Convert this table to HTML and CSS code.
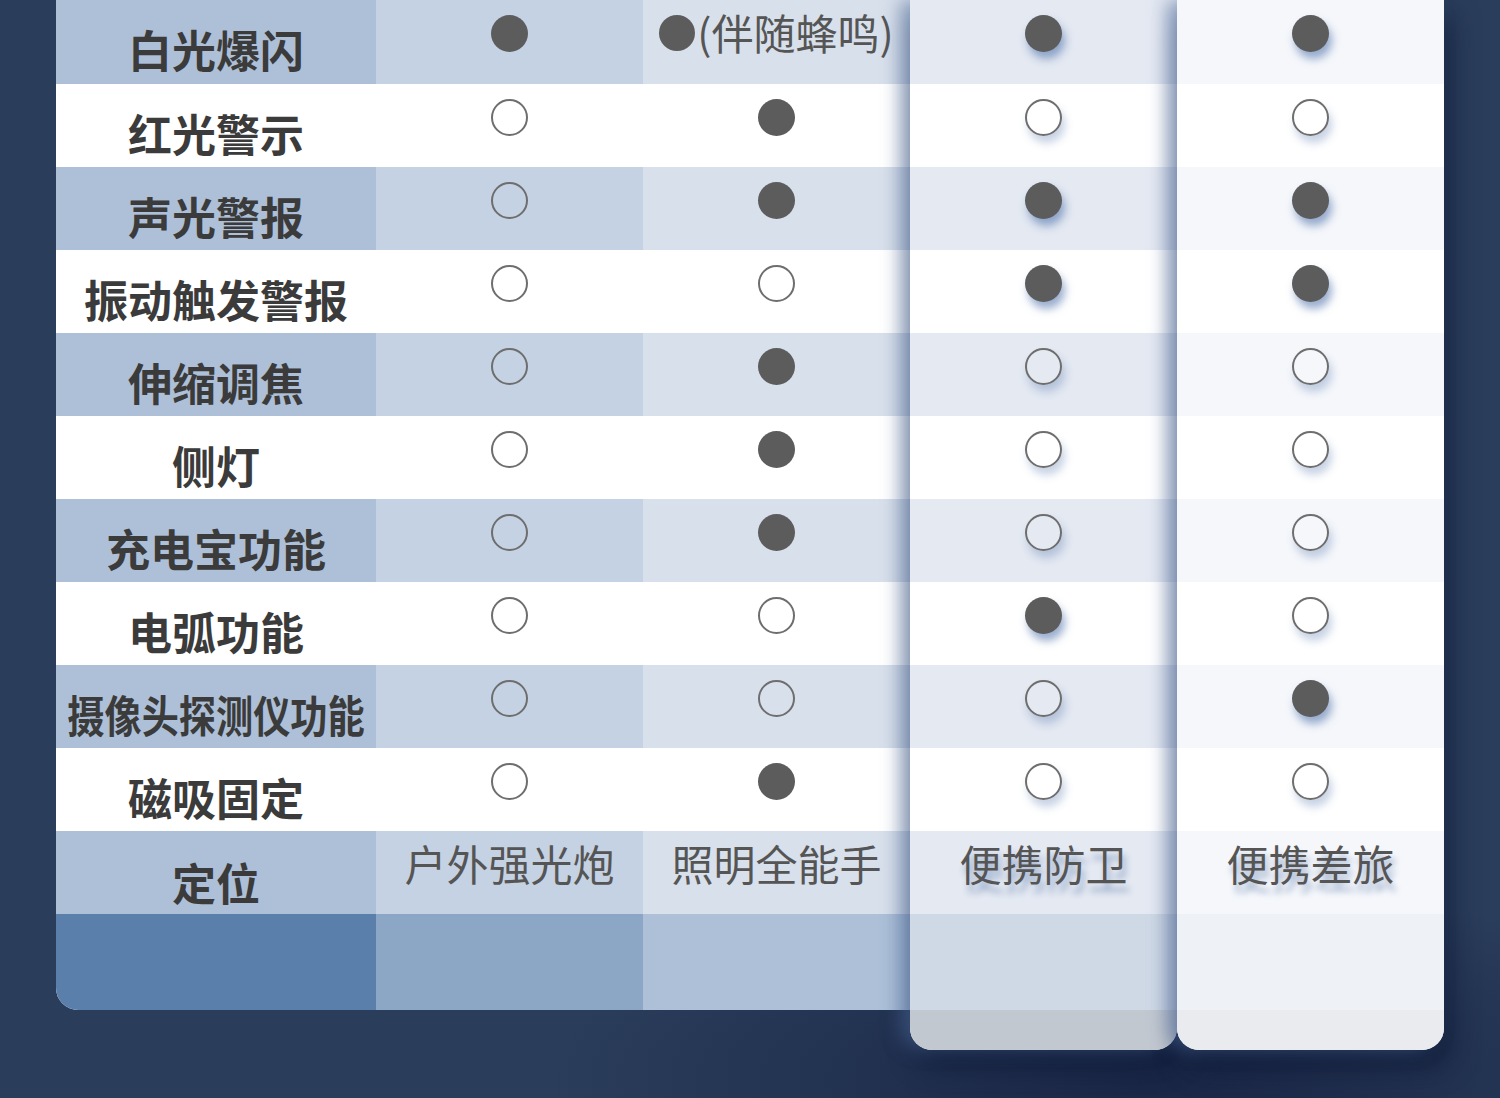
FILE: index.html
```html
<!DOCTYPE html>
<html lang="zh-CN">
<head>
<meta charset="utf-8">
<title>对比表</title>
<link rel="stylesheet" href="styles.css">
</head>
<body>
<div class="table">
  <div class="base">
    <div class="col label">
      <div class="cell s"><span class="lt">白光爆闪</span></div>
      <div class="cell"><span class="lt">红光警示</span></div>
      <div class="cell s"><span class="lt">声光警报</span></div>
      <div class="cell"><span class="lt">振动触发警报</span></div>
      <div class="cell s"><span class="lt">伸缩调焦</span></div>
      <div class="cell"><span class="lt">侧灯</span></div>
      <div class="cell s"><span class="lt">充电宝功能</span></div>
      <div class="cell"><span class="lt">电弧功能</span></div>
      <div class="cell s"><span class="lt tight">摄像头探测仪功能</span></div>
      <div class="cell"><span class="lt">磁吸固定</span></div>
      <div class="cell s"><span class="lt">定位</span></div>
      <div class="cell f"></div>
    </div>
    <div class="col c1">
      <div class="cell s"><span class="dot"></span></div>
      <div class="cell"><span class="ring"></span></div>
      <div class="cell s"><span class="ring"></span></div>
      <div class="cell"><span class="ring"></span></div>
      <div class="cell s"><span class="ring"></span></div>
      <div class="cell"><span class="ring"></span></div>
      <div class="cell s"><span class="ring"></span></div>
      <div class="cell"><span class="ring"></span></div>
      <div class="cell s"><span class="ring"></span></div>
      <div class="cell"><span class="ring"></span></div>
      <div class="cell s"><span class="name">户外强光炮</span></div>
      <div class="cell f"></div>
    </div>
    <div class="col c2">
      <div class="cell s note-cell"><span class="note"><span class="dot small"></span>(伴随蜂鸣)</span></div>
      <div class="cell"><span class="dot"></span></div>
      <div class="cell s"><span class="dot"></span></div>
      <div class="cell"><span class="ring"></span></div>
      <div class="cell s"><span class="dot"></span></div>
      <div class="cell"><span class="dot"></span></div>
      <div class="cell s"><span class="dot"></span></div>
      <div class="cell"><span class="ring"></span></div>
      <div class="cell s"><span class="ring"></span></div>
      <div class="cell"><span class="dot"></span></div>
      <div class="cell s"><span class="name">照明全能手</span></div>
      <div class="cell f"></div>
    </div>
  </div>
  <div class="col card c3">
    <div class="cell s"><span class="dot"></span></div>
    <div class="cell"><span class="ring"></span></div>
    <div class="cell s"><span class="dot"></span></div>
    <div class="cell"><span class="dot"></span></div>
    <div class="cell s"><span class="ring"></span></div>
    <div class="cell"><span class="ring"></span></div>
    <div class="cell s"><span class="ring"></span></div>
    <div class="cell"><span class="dot"></span></div>
    <div class="cell s"><span class="ring"></span></div>
    <div class="cell"><span class="ring"></span></div>
    <div class="cell s"><span class="name">便携防卫</span></div>
    <div class="cell f"></div>
    <div class="foot"></div>
  </div>
  <div class="col card c4">
    <div class="cell s"><span class="dot"></span></div>
    <div class="cell"><span class="ring"></span></div>
    <div class="cell s"><span class="dot"></span></div>
    <div class="cell"><span class="dot"></span></div>
    <div class="cell s"><span class="ring"></span></div>
    <div class="cell"><span class="ring"></span></div>
    <div class="cell s"><span class="ring"></span></div>
    <div class="cell"><span class="ring"></span></div>
    <div class="cell s"><span class="dot"></span></div>
    <div class="cell"><span class="ring"></span></div>
    <div class="cell s"><span class="name">便携差旅</span></div>
    <div class="cell f"></div>
    <div class="foot"></div>
  </div>
</div>
</body>
</html>
```

FILE: styles.css
```css
html, body {
  margin: 0;
  padding: 0;
}
body {
  width: 1500px;
  height: 1098px;
  overflow: hidden;
  background: radial-gradient(ellipse 600px 200px at 1150px 1080px, #1a2646 0%, rgba(26,38,70,0) 100%), #2a3d5b;
  font-family: "Noto Sans CJK SC", "Noto Sans", sans-serif;
  color: #555;
}
.table {
  display: flex;
  align-items: flex-start;
  margin-left: 56px;
}
.base {
  display: flex;
  border-bottom-left-radius: 22px;
  overflow: hidden;
}
.col {
  display: flex;
  flex-direction: column;
  background: #fff;
}
.label { width: 320px; }
.c1 { width: 267px; }
.c2 { width: 267px; }
.card {
  width: 267px;
  position: relative;
  border-radius: 0 0 22px 22px;
  overflow: hidden;
}
.c3 {
  z-index: 1;
  box-shadow: -10px 0 18px rgba(80, 110, 160, 0.5), 4px 14px 26px rgba(8, 18, 45, 0.55);
}
.c4 {
  z-index: 2;
  box-shadow: -10px 0 18px rgba(80, 110, 160, 0.55), 6px 16px 28px rgba(8, 18, 45, 0.6);
}
.cell {
  height: 83px;
  display: flex;
  justify-content: center;
  align-items: flex-start;
  padding-top: 15px;
  box-sizing: border-box;
  background: #fff;
}
.cell:first-child { height: 84px; }
.cell.f { height: 96px; padding: 0; }
.cell.note-cell { padding-top: 10px; }
.foot { height: 40px; }

.label .s { background: #adc0d8; }
.label .f { background: #5b7fab; }
.c1 .s { background: #c5d2e3; }
.c1 .f { background: #8ca6c6; }
.c2 .s { background: #d8e0eb; }
.c2 .f { background: #adc0d8; }
.c3 .s { background: #e4e9f2; }
.c3 .f { background: #cfd9e6; }
.c3 .foot { background: #c2c8d0; }
.c4 .s { background: #f5f7fb; }
.c4 .f { background: #eef2f6; }
.c4 .foot { background: #e9ebee; }

.label .cell { padding-top: 27px; }
.lt {
  display: inline-block;
  font-size: 44px;
  line-height: 44px;
  font-weight: 700;
  color: #3b3b3b;
  white-space: nowrap;
}
.lt.tight {
  transform: scaleX(0.845);
}
.label .cell:nth-child(11) { padding-top: 29px; }

.dot {
  width: 37px;
  height: 37px;
  border-radius: 50%;
  background: #5c5c5c;
  display: inline-block;
}
.ring {
  width: 37px;
  height: 37px;
  border-radius: 50%;
  border: 2px solid #6e6e6e;
  box-sizing: border-box;
  display: inline-block;
}
.card .dot {
  box-shadow: 3px 7px 8px rgba(70, 105, 165, 0.55);
}
.card .ring {
  box-shadow: 3px 7px 8px rgba(70, 105, 165, 0.3);
}
.note {
  display: flex;
  align-items: center;
  font-size: 42px;
  line-height: 44px;
  color: #555;
  white-space: nowrap;
}
.dot.small {
  width: 36px;
  height: 36px;
  margin-right: 2px;
  margin-top: 2px;
}
.name {
  font-size: 42px;
  line-height: 42px;
  margin-top: -4px;
  color: #555;
  white-space: nowrap;
}
.card .name {
  text-shadow: 3px 8px 6px rgba(60, 95, 150, 0.45);
}
```
